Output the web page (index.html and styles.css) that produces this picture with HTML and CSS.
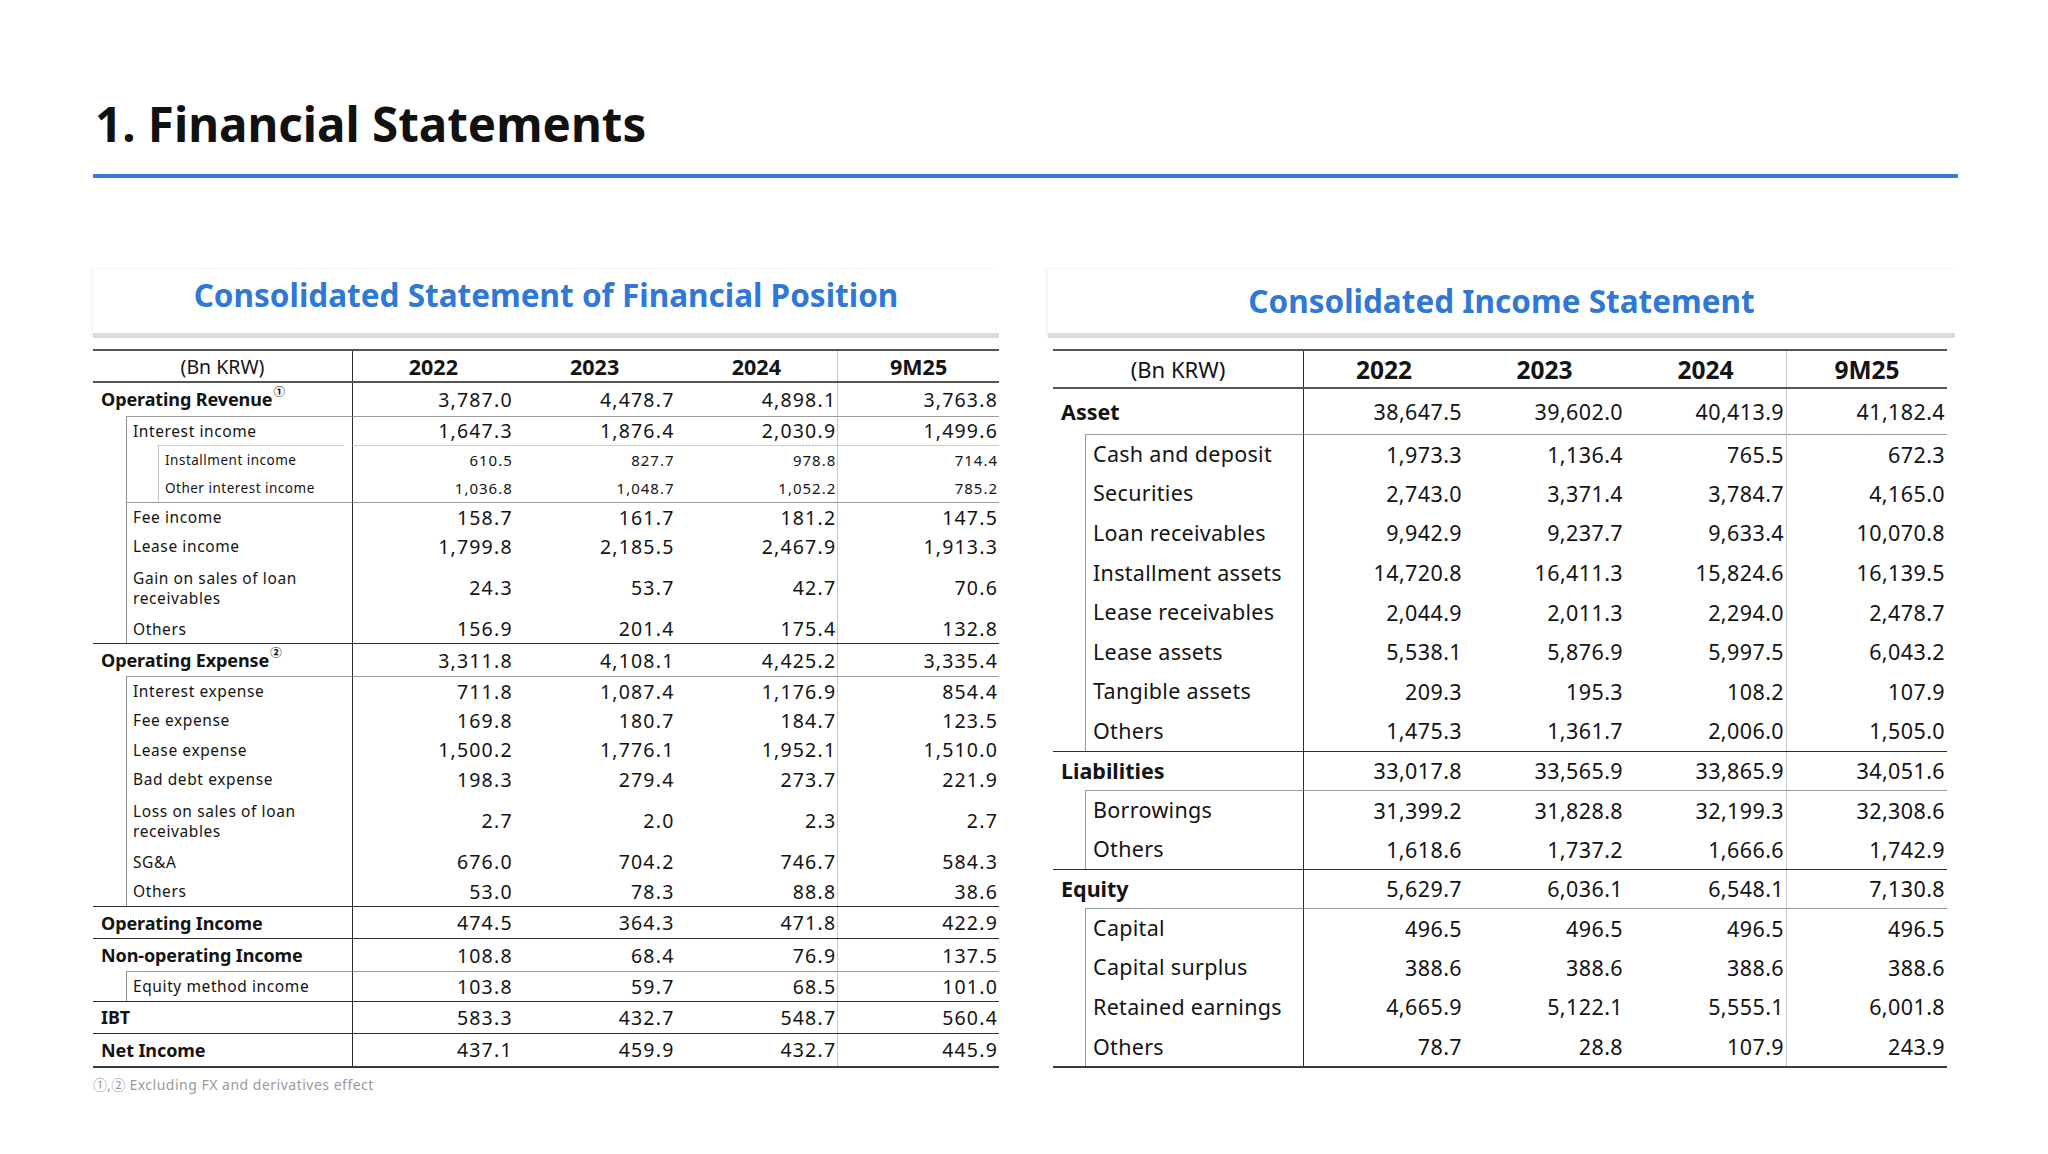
FILE: index.html
```html
<!DOCTYPE html>
<html lang="en">
<head>
<meta charset="utf-8">
<title>1. Financial Statements</title>
<link rel="stylesheet" href="styles.css">
</head>
<body>
<div class="page">
  <header class="page-head">
    <h1 class="page-title">1. Financial Statements</h1>
  </header>

  <main class="panels">
    <section class="panel panel-left">
      <div class="panel-head panel-head-left">
        <h2 class="panel-title">Consolidated Statement of Financial Position</h2>
      </div>

      <div class="fin-table fin-left">
        <div class="row row-head">
          <div class="cell label unit">(Bn KRW)</div>
          <div class="cell yr v1">2022</div>
          <div class="cell yr">2023</div>
          <div class="cell yr">2024</div>
          <div class="cell yr v4">9M25</div>
        </div>

        <div class="row row-major">
          <div class="cell label lv0"><span>Operating Revenue<sup class="mark">①</sup></span></div>
          <div class="cell val v1">3,787.0</div><div class="cell val">4,478.7</div><div class="cell val">4,898.1</div><div class="cell val v4">3,763.8</div>
        </div>
        <div class="row row-sub gtop">
          <div class="cell label lv1">Interest income</div>
          <div class="cell val v1">1,647.3</div><div class="cell val">1,876.4</div><div class="cell val">2,030.9</div><div class="cell val v4">1,499.6</div>
        </div>
        <div class="row row-sub2 gtop2">
          <div class="cell label lv1 nest"><div class="lv2">Installment income</div></div>
          <div class="cell val small v1">610.5</div><div class="cell val small">827.7</div><div class="cell val small">978.8</div><div class="cell val small v4">714.4</div>
        </div>
        <div class="row row-sub2">
          <div class="cell label lv1 nest"><div class="lv2">Other interest income</div></div>
          <div class="cell val small v1">1,036.8</div><div class="cell val small">1,048.7</div><div class="cell val small">1,052.2</div><div class="cell val small v4">785.2</div>
        </div>
        <div class="row row-sub gtop">
          <div class="cell label lv1">Fee income</div>
          <div class="cell val v1">158.7</div><div class="cell val">161.7</div><div class="cell val">181.2</div><div class="cell val v4">147.5</div>
        </div>
        <div class="row row-sub">
          <div class="cell label lv1">Lease income</div>
          <div class="cell val v1">1,799.8</div><div class="cell val">2,185.5</div><div class="cell val">2,467.9</div><div class="cell val v4">1,913.3</div>
        </div>
        <div class="row row-two">
          <div class="cell label lv1">Gain on sales of loan receivables</div>
          <div class="cell val v1">24.3</div><div class="cell val">53.7</div><div class="cell val">42.7</div><div class="cell val v4">70.6</div>
        </div>
        <div class="row row-sub">
          <div class="cell label lv1">Others</div>
          <div class="cell val v1">156.9</div><div class="cell val">201.4</div><div class="cell val">175.4</div><div class="cell val v4">132.8</div>
        </div>

        <div class="row row-major sep">
          <div class="cell label lv0"><span>Operating Expense<sup class="mark">②</sup></span></div>
          <div class="cell val v1">3,311.8</div><div class="cell val">4,108.1</div><div class="cell val">4,425.2</div><div class="cell val v4">3,335.4</div>
        </div>
        <div class="row row-sub gtop">
          <div class="cell label lv1">Interest expense</div>
          <div class="cell val v1">711.8</div><div class="cell val">1,087.4</div><div class="cell val">1,176.9</div><div class="cell val v4">854.4</div>
        </div>
        <div class="row row-sub">
          <div class="cell label lv1">Fee expense</div>
          <div class="cell val v1">169.8</div><div class="cell val">180.7</div><div class="cell val">184.7</div><div class="cell val v4">123.5</div>
        </div>
        <div class="row row-sub">
          <div class="cell label lv1">Lease expense</div>
          <div class="cell val v1">1,500.2</div><div class="cell val">1,776.1</div><div class="cell val">1,952.1</div><div class="cell val v4">1,510.0</div>
        </div>
        <div class="row row-sub">
          <div class="cell label lv1">Bad debt expense</div>
          <div class="cell val v1">198.3</div><div class="cell val">279.4</div><div class="cell val">273.7</div><div class="cell val v4">221.9</div>
        </div>
        <div class="row row-two">
          <div class="cell label lv1">Loss on sales of loan receivables</div>
          <div class="cell val v1">2.7</div><div class="cell val">2.0</div><div class="cell val">2.3</div><div class="cell val v4">2.7</div>
        </div>
        <div class="row row-sub">
          <div class="cell label lv1">SG&amp;A</div>
          <div class="cell val v1">676.0</div><div class="cell val">704.2</div><div class="cell val">746.7</div><div class="cell val v4">584.3</div>
        </div>
        <div class="row row-sub">
          <div class="cell label lv1">Others</div>
          <div class="cell val v1">53.0</div><div class="cell val">78.3</div><div class="cell val">88.8</div><div class="cell val v4">38.6</div>
        </div>

        <div class="row row-major sep">
          <div class="cell label lv0">Operating Income</div>
          <div class="cell val v1">474.5</div><div class="cell val">364.3</div><div class="cell val">471.8</div><div class="cell val v4">422.9</div>
        </div>
        <div class="row row-major sep">
          <div class="cell label lv0">Non-operating Income</div>
          <div class="cell val v1">108.8</div><div class="cell val">68.4</div><div class="cell val">76.9</div><div class="cell val v4">137.5</div>
        </div>
        <div class="row row-sub gtop">
          <div class="cell label lv1">Equity method income</div>
          <div class="cell val v1">103.8</div><div class="cell val">59.7</div><div class="cell val">68.5</div><div class="cell val v4">101.0</div>
        </div>
        <div class="row row-major sep">
          <div class="cell label lv0">IBT</div>
          <div class="cell val v1">583.3</div><div class="cell val">432.7</div><div class="cell val">548.7</div><div class="cell val v4">560.4</div>
        </div>
        <div class="row row-major sep">
          <div class="cell label lv0">Net Income</div>
          <div class="cell val v1">437.1</div><div class="cell val">459.9</div><div class="cell val">432.7</div><div class="cell val v4">445.9</div>
        </div>
      </div>

      <p class="footnote"><span class="fn-mark">①</span>,<span class="fn-mark">②</span> Excluding FX and derivatives effect</p>
    </section>

    <section class="panel panel-right">
      <div class="panel-head panel-head-right">
        <h2 class="panel-title">Consolidated Income Statement</h2>
      </div>

      <div class="fin-table fin-right">
        <div class="row row-head">
          <div class="cell label unit">(Bn KRW)</div>
          <div class="cell yr v1">2022</div>
          <div class="cell yr">2023</div>
          <div class="cell yr">2024</div>
          <div class="cell yr v4">9M25</div>
        </div>

        <div class="row row-major row-tall">
          <div class="cell label lv0">Asset</div>
          <div class="cell val v1">38,647.5</div><div class="cell val">39,602.0</div><div class="cell val">40,413.9</div><div class="cell val v4">41,182.4</div>
        </div>
        <div class="row row-sub gtop">
          <div class="cell label lv1">Cash and deposit</div>
          <div class="cell val v1">1,973.3</div><div class="cell val">1,136.4</div><div class="cell val">765.5</div><div class="cell val v4">672.3</div>
        </div>
        <div class="row row-sub">
          <div class="cell label lv1">Securities</div>
          <div class="cell val v1">2,743.0</div><div class="cell val">3,371.4</div><div class="cell val">3,784.7</div><div class="cell val v4">4,165.0</div>
        </div>
        <div class="row row-sub">
          <div class="cell label lv1">Loan receivables</div>
          <div class="cell val v1">9,942.9</div><div class="cell val">9,237.7</div><div class="cell val">9,633.4</div><div class="cell val v4">10,070.8</div>
        </div>
        <div class="row row-sub">
          <div class="cell label lv1">Installment assets</div>
          <div class="cell val v1">14,720.8</div><div class="cell val">16,411.3</div><div class="cell val">15,824.6</div><div class="cell val v4">16,139.5</div>
        </div>
        <div class="row row-sub">
          <div class="cell label lv1">Lease receivables</div>
          <div class="cell val v1">2,044.9</div><div class="cell val">2,011.3</div><div class="cell val">2,294.0</div><div class="cell val v4">2,478.7</div>
        </div>
        <div class="row row-sub">
          <div class="cell label lv1">Lease assets</div>
          <div class="cell val v1">5,538.1</div><div class="cell val">5,876.9</div><div class="cell val">5,997.5</div><div class="cell val v4">6,043.2</div>
        </div>
        <div class="row row-sub">
          <div class="cell label lv1">Tangible assets</div>
          <div class="cell val v1">209.3</div><div class="cell val">195.3</div><div class="cell val">108.2</div><div class="cell val v4">107.9</div>
        </div>
        <div class="row row-sub">
          <div class="cell label lv1">Others</div>
          <div class="cell val v1">1,475.3</div><div class="cell val">1,361.7</div><div class="cell val">2,006.0</div><div class="cell val v4">1,505.0</div>
        </div>

        <div class="row row-major sep">
          <div class="cell label lv0">Liabilities</div>
          <div class="cell val v1">33,017.8</div><div class="cell val">33,565.9</div><div class="cell val">33,865.9</div><div class="cell val v4">34,051.6</div>
        </div>
        <div class="row row-sub gtop">
          <div class="cell label lv1">Borrowings</div>
          <div class="cell val v1">31,399.2</div><div class="cell val">31,828.8</div><div class="cell val">32,199.3</div><div class="cell val v4">32,308.6</div>
        </div>
        <div class="row row-sub">
          <div class="cell label lv1">Others</div>
          <div class="cell val v1">1,618.6</div><div class="cell val">1,737.2</div><div class="cell val">1,666.6</div><div class="cell val v4">1,742.9</div>
        </div>

        <div class="row row-major sep">
          <div class="cell label lv0">Equity</div>
          <div class="cell val v1">5,629.7</div><div class="cell val">6,036.1</div><div class="cell val">6,548.1</div><div class="cell val v4">7,130.8</div>
        </div>
        <div class="row row-sub gtop">
          <div class="cell label lv1">Capital</div>
          <div class="cell val v1">496.5</div><div class="cell val">496.5</div><div class="cell val">496.5</div><div class="cell val v4">496.5</div>
        </div>
        <div class="row row-sub">
          <div class="cell label lv1">Capital surplus</div>
          <div class="cell val v1">388.6</div><div class="cell val">388.6</div><div class="cell val">388.6</div><div class="cell val v4">388.6</div>
        </div>
        <div class="row row-sub">
          <div class="cell label lv1">Retained earnings</div>
          <div class="cell val v1">4,665.9</div><div class="cell val">5,122.1</div><div class="cell val">5,555.1</div><div class="cell val v4">6,001.8</div>
        </div>
        <div class="row row-sub">
          <div class="cell label lv1">Others</div>
          <div class="cell val v1">78.7</div><div class="cell val">28.8</div><div class="cell val">107.9</div><div class="cell val v4">243.9</div>
        </div>
      </div>
    </section>
  </main>
</div>
</body>
</html>
```

FILE: styles.css
```css
* { box-sizing: border-box; }

html, body {
  margin: 0;
  padding: 0;
  background: #ffffff;
}

body {
  font-family: "Noto Sans", "DejaVu Sans", sans-serif;
  color: #141414;
  width: 2048px;
  height: 1154px;
  overflow: hidden;
}

.page {
  padding: 92px 90px 0 93px;
}

/* ---------- page header ---------- */
.page-head {
  border-bottom: 4px solid #3479d8;
  padding-bottom: 18px;
}

.page-title {
  margin: 0 0 0 2px;
  font-size: 47.5px;
  line-height: 64px;
  font-weight: 700;
  color: #111;
  letter-spacing: 0;
}

/* ---------- panels ---------- */
.panels {
  display: grid;
  grid-template-columns: 906px 907px;
  column-gap: 49px;
  margin-top: 92px;
  align-items: start;
}

.panel {
  display: flex;
  flex-direction: column;
}

.panel-head {
  height: 68px;
  border-bottom: 5px solid #dcdcdc;
  box-shadow: -2px -1px 3px rgba(0, 0, 0, 0.05);
  text-align: center;
}

.panel-head-left { padding-top: 5px; }
.panel-head-right { padding-top: 11px; }

.panel-title {
  margin: 0;
  font-size: 31.5px;
  line-height: 40px;
  font-weight: 700;
  color: #3078d6;
}

/* ---------- tables ---------- */
.fin-table {
  margin-top: 11px;
  border-top: 2px solid #555;
  border-bottom: 2px solid #3a3a3a;
}

.fin-right {
  margin-left: 5px;
  margin-right: 8px;
}

.row {
  display: grid;
  grid-template-columns: 259px repeat(4, 1fr);
}

.fin-right .row {
  grid-template-columns: 250px repeat(4, 1fr);
}

.cell {
  display: flex;
  align-items: center;
  min-width: 0;
}

.row-head {
  height: 32px;
  border-bottom: 2px solid #555;
}

.fin-right .row-head {
  height: 38px;
}

.row-head .cell {
  justify-content: center;
}

.unit {
  font-size: 19.5px;
  font-weight: 400;
}

.yr {
  font-size: 21.5px;
  font-weight: 700;
}

.fin-right .unit { font-size: 22px; }
.fin-right .yr { font-size: 24.5px; }

.row-major { height: 32.5px; }
.row-sub { height: 29.6px; }
.row-sub2 { height: 28.5px; }
.row-two { height: 52.5px; }

.fin-right .row-major { height: 39px; }
.fin-right .row-tall { height: 45px; }
.fin-right .row-sub { height: 39.6px; }

.sep {
  border-top: 1.5px solid #2e2e2e;
}

/* vertical separators */
.v1 { border-left: 1.5px solid #2e2e2e; }
.v4 { border-left: 1px solid #c9c9c9; }

/* labels */
.lv0 {
  padding-left: 8px;
  font-size: 18px;
  font-weight: 700;
  letter-spacing: -0.1px;
}

.lv1 {
  margin-left: 33px;
  border-left: 1px solid #8f8f8f;
  padding-left: 6px;
  padding-right: 8px;
  font-size: 15.5px;
  letter-spacing: 0.6px;
  line-height: 20px;
}

.lv1.nest {
  padding-left: 0;
  align-items: stretch;
}

.lv2 {
  flex: 1;
  display: flex;
  align-items: center;
  margin-left: 31px;
  border-left: 1px solid #c4c4c4;
  padding-left: 6px;
  font-size: 13.5px;
  letter-spacing: 0.5px;
}

.fin-right .lv0 {
  font-size: 21.5px;
  padding-left: 8px;
  letter-spacing: 0;
}

.fin-right .lv1 {
  margin-left: 32px;
  padding-left: 7px;
  font-size: 21.5px;
  letter-spacing: 0.3px;
  border-left-color: #9a9a9a;
}

/* group top borders */
.gtop > .cell { border-top: 1px solid #9a9a9a; }
.gtop2 > .val { border-top: 1px solid #cfcfcf; }
.gtop2 .lv2 { border-top: 1px solid #cfcfcf; }

/* values */
.val {
  justify-content: flex-end;
  padding-right: 1px;
  font-size: 19.5px;
  letter-spacing: 1.2px;
}

.val.small {
  font-size: 15px;
  letter-spacing: 1px;
}

.fin-right .val {
  font-size: 21.5px;
  letter-spacing: 0.4px;
  padding-right: 2px;
}

.mark {
  font-family: "Noto Sans CJK KR", "DejaVu Sans", sans-serif;
  font-size: 11.5px;
  font-weight: 700;
  color: #111;
  line-height: 0;
  vertical-align: 10px;
  margin-left: 1px;
  letter-spacing: 0;
}

.footnote {
  margin: 7px 0 0 0;
  font-size: 14px;
  line-height: 18px;
  color: #9a9a9a;
  letter-spacing: 0.5px;
}

.fn-mark {
  font-family: "Noto Sans CJK KR", "DejaVu Sans", sans-serif;
  font-size: 14px;
  letter-spacing: 0;
}
```
